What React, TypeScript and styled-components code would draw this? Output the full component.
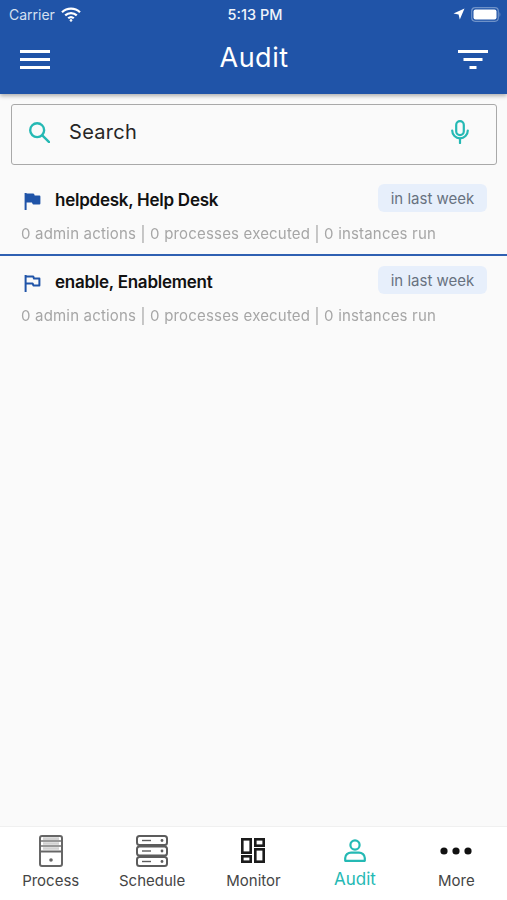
import React from "react";
import styled, { createGlobalStyle } from "styled-components";

const GlobalStyle = createGlobalStyle`
    html, body {
        margin: 0;
        padding: 0;
        background: #fafafa;
    }
    * {
        box-sizing: border-box;
    }
`;

const FONT = `Inter, "Open Sans", "Liberation Sans", sans-serif`;
const BLUE = "#2054a8";
const TEAL = "#25b9b4";

const Page = styled.div`
    width: 507px;
    height: 900px;
    display: flex;
    flex-direction: column;
    background: #fafafa;
    font-family: ${FONT};
    overflow: hidden;
`;

const Header = styled.header`
    height: 94px;
    flex-shrink: 0;
    background: ${BLUE};
    color: #fff;
    box-shadow: 0 2px 4px rgba(0, 0, 0, 0.3);
`;

const StatusBar = styled.div`
    height: 28px;
    padding: 0 6px 0 9px;
    display: grid;
    grid-template-columns: 1fr auto 1fr;
    align-items: center;
    font-size: 14px;
`;

const StatusLeft = styled.div`
    display: flex;
    align-items: center;
    gap: 6px;
    color: #d5e0f0;
`;

const StatusTime = styled.div`
    font-weight: 500;
    font-size: 14.5px;
    color: #eef3fa;
`;

const StatusRight = styled.div`
    display: flex;
    align-items: center;
    justify-content: flex-end;
    gap: 6px;
`;

const AppBar = styled.div`
    height: 58px;
    padding: 6px 19px 0 20px;
    display: flex;
    align-items: center;
    justify-content: space-between;
`;

const Title = styled.div`
    font-size: 27px;
    font-weight: 400;
    letter-spacing: 0.5px;
    margin-top: -5px;
`;

const SearchBox = styled.div`
    height: 61px;
    margin: 10px 10px 0 11px;
    padding: 0 27px 5px 16px;
    display: flex;
    align-items: center;
    border: 1.5px solid #a9a9a9;
    border-radius: 3px;
    background: #fafafa;
`;

const SearchText = styled.div`
    flex: 1;
    margin-left: 19px;
    font-size: 20px;
    letter-spacing: 0.3px;
    color: #262626;
`;

const Item = styled.div<{ $divided?: boolean }>`
    padding: ${(p) => (p.$divided ? "19px" : "10px")} 20px 0 21px;
    height: ${(p) => (p.$divided ? "91px" : "80px")};
    border-bottom: ${(p) => (p.$divided ? `2.5px solid #2f60b2` : "none")};
`;

const ItemTop = styled.div`
    height: 28px;
    display: flex;
    align-items: center;
`;

const FlagSlot = styled.div`
    width: 34px;
    padding: 6px 0 0 3px;
    display: flex;
`;

const ItemTitle = styled.div`
    flex: 1;
    font-size: 17px;
    font-weight: 600;
    letter-spacing: -0.25px;
    color: #111;
    margin-top: 4px;
`;

const Pill = styled.div`
    width: 109px;
    height: 28px;
    display: flex;
    align-items: center;
    justify-content: center;
    border-radius: 6px;
    background: #e7effb;
    color: #687280;
    font-size: 15px;
`;

const ItemSub = styled.div`
    margin-top: 12px;
    font-size: 15px;
    letter-spacing: 0.18px;
    color: #a6a6a6;
    white-space: nowrap;
    will-change: transform;
`;

const Spacer = styled.div`
    flex: 1;
`;

const BottomNav = styled.nav`
    height: 74px;
    flex-shrink: 0;
    display: grid;
    grid-template-columns: repeat(5, 1fr);
    background: #fff;
    border-top: 1.5px solid #f0f0f0;
`;

const NavItem = styled.div<{ $active?: boolean }>`
    display: flex;
    flex-direction: column;
    align-items: center;
    color: ${(p) => (p.$active ? TEAL : "#454545")};
`;

const NavIcon = styled.div<{ $top: number }>`
    height: 38px;
    padding-top: ${(p) => p.$top}px;
    display: flex;
    align-items: flex-start;
    justify-content: center;
`;

const NavLabel = styled.div<{ $active?: boolean }>`
    margin-top: ${(p) => (p.$active ? "4px" : "6px")};
    font-size: ${(p) => (p.$active ? "17px" : "15px")};
    line-height: 20px;
    white-space: nowrap;
`;

const Wifi = () => (
    <svg width="20" height="15" viewBox="0 0 20 15" fill="none" stroke="#fff" strokeWidth="2.2">
        <path d="M1 5.2a13 13 0 0 1 18 0" />
        <path d="M4.2 8.4a8.4 8.4 0 0 1 11.6 0" />
        <path d="M7.2 11.3a4.2 4.2 0 0 1 5.6 0" />
        <circle cx="10" cy="13.4" r="0.9" fill="#fff" strokeWidth="1" />
    </svg>
);

const LocationArrow = () => (
    <svg width="12" height="12" viewBox="0 0 12 12">
        <path d="M11.5 0.5 L0.5 5.5 L5.6 6.4 L6.8 11.5 Z" fill="#fff" />
    </svg>
);

const Battery = () => (
    <svg width="30" height="15" viewBox="0 0 30 15">
        <rect x="0.7" y="0.7" width="26.6" height="13.6" rx="3.5" fill="none" stroke="#6f92c8" strokeWidth="1.2" />
        <rect x="2.5" y="2.5" width="23" height="10" rx="2" fill="#fff" />
        <path d="M28.5 5.2 C29.6 5.6 29.6 9.4 28.5 9.8 Z" fill="#6f92c8" />
    </svg>
);

const MenuIcon = () => (
    <svg width="30" height="20" viewBox="0 0 30 20" fill="#fff">
        <rect y="0" width="30" height="3" />
        <rect y="8" width="30" height="3" />
        <rect y="16" width="30" height="3" />
    </svg>
);

const FilterIcon = () => (
    <svg width="30" height="20" viewBox="0 0 30 20" fill="#fff">
        <rect y="0" width="30" height="3" />
        <rect x="5.5" y="8" width="19" height="3" />
        <rect x="11.5" y="16" width="7" height="3" />
    </svg>
);

const SearchIcon = () => (
    <svg width="22" height="22" viewBox="0 0 24 24" fill="none" stroke={TEAL} strokeWidth="2.6">
        <circle cx="10" cy="10" r="7.6" />
        <path d="M15.6 15.6 L23 23" strokeLinecap="round" />
    </svg>
);

const MicIcon = () => (
    <svg width="18" height="24" viewBox="0 0 18 24" fill="none" stroke={TEAL} strokeWidth="2.2" strokeLinecap="round">
        <rect x="5.2" y="1.1" width="7.6" height="14" rx="3.8" />
        <path d="M1.2 10.5a7.8 7.8 0 0 0 15.6 0" />
        <path d="M9 18.5 V23" />
    </svg>
);

const FlagIcon = ({ filled }: { filled?: boolean }) => (
    <svg width="17" height="17" viewBox="0 0 17 17" fill="none" stroke={BLUE} strokeWidth="2">
        <path
            d="M1.6 1.4 H9.2 L10 3.6 H15.4 V10.4 H9.4 L8.6 8.4 H1.6"
            fill={filled ? BLUE : "none"}
            strokeLinejoin="round"
        />
        <path d="M1.6 0.6 V16.6" strokeLinecap="round" />
    </svg>
);

const ProcessIcon = () => (
    <svg width="24" height="32" viewBox="0 0 24 32" fill="none" stroke="#666" strokeWidth="2">
        <rect x="1" y="1" width="22" height="30" rx="2" />
        <path d="M2 16.5 H22" strokeWidth="2" />
        <path d="M2 6 H22 M2 11 H22" strokeWidth="1.6" stroke="#777" />
        <path d="M4 3.6 H20 M4 8.5 H20 M4 13.5 H20" stroke="#d2d2d2" strokeWidth="2.6" />
        <circle cx="12" cy="25" r="1.8" fill="#666" stroke="none" />
    </svg>
);

const ScheduleIcon = () => (
    <svg width="32" height="32" viewBox="0 0 32 32" fill="none" stroke="#5c5c5c" strokeWidth="2">
        {[1, 11.5, 22].map((y) => (
            <g key={y}>
                <rect x="1" y={y} width="30" height="9" rx="2.5" />
                <path d={`M6 ${y + 4.5} H15`} strokeWidth="1.4" />
                <circle cx="26" cy={y + 4.5} r="1.4" fill="#5c5c5c" stroke="none" />
            </g>
        ))}
    </svg>
);

const MonitorIcon = () => (
    <svg width="24" height="25" viewBox="0 0 24 25" fill="none" stroke="#1c1c1c" strokeWidth="2.6">
        <rect x="1.3" y="1.3" width="8.4" height="13.4" />
        <rect x="14.3" y="1.3" width="8.4" height="6.4" />
        <rect x="1.3" y="18.3" width="8.4" height="5.4" />
        <rect x="14.3" y="11.3" width="8.4" height="12.4" />
    </svg>
);

const AuditIcon = () => (
    <svg width="22" height="23" viewBox="0 0 22 23" fill="none" stroke={TEAL} strokeWidth="2.2">
        <circle cx="11" cy="6" r="4.6" />
        <path d="M1.2 21.8 V19 C1.2 15.8 4 13.6 7 13.6 H15 C18 13.6 20.8 15.8 20.8 19 V21.8 Z" strokeLinejoin="round" />
    </svg>
);

const MoreIcon = () => (
    <svg width="32" height="24" viewBox="0 0 32 24" fill="#111">
        <circle cx="4" cy="12" r="3.6" />
        <circle cx="16" cy="12" r="3.6" />
        <circle cx="28" cy="12" r="3.6" />
    </svg>
);

const SUMMARY = "0 admin actions | 0 processes executed | 0 instances run";

const navItems = [
    { label: "Process", icon: <ProcessIcon />, top: 8 },
    { label: "Schedule", icon: <ScheduleIcon />, top: 8 },
    { label: "Monitor", icon: <MonitorIcon />, top: 11 },
    { label: "Audit", icon: <AuditIcon />, top: 12, active: true },
    { label: "More", icon: <MoreIcon />, top: 12 },
];

const App = () => {
    return (
        <Page>
            <GlobalStyle />
            <Header>
                <StatusBar>
                    <StatusLeft>
                        Carrier
                        <Wifi />
                    </StatusLeft>
                    <StatusTime>5:13 PM</StatusTime>
                    <StatusRight>
                        <LocationArrow />
                        <Battery />
                    </StatusRight>
                </StatusBar>
                <AppBar>
                    <MenuIcon />
                    <Title>Audit</Title>
                    <FilterIcon />
                </AppBar>
            </Header>
            <SearchBox>
                <SearchIcon />
                <SearchText>Search</SearchText>
                <MicIcon />
            </SearchBox>
            <Item $divided>
                <ItemTop>
                    <FlagSlot>
                        <FlagIcon filled />
                    </FlagSlot>
                    <ItemTitle>helpdesk, Help Desk</ItemTitle>
                    <Pill>in last week</Pill>
                </ItemTop>
                <ItemSub>{SUMMARY}</ItemSub>
            </Item>
            <Item>
                <ItemTop>
                    <FlagSlot>
                        <FlagIcon />
                    </FlagSlot>
                    <ItemTitle>enable, Enablement</ItemTitle>
                    <Pill>in last week</Pill>
                </ItemTop>
                <ItemSub>{SUMMARY}</ItemSub>
            </Item>
            <Spacer />
            <BottomNav>
                {navItems.map((item) => (
                    <NavItem key={item.label} $active={item.active}>
                        <NavIcon $top={item.top}>{item.icon}</NavIcon>
                        <NavLabel $active={item.active}>{item.label}</NavLabel>
                    </NavItem>
                ))}
            </BottomNav>
        </Page>
    );
};

export default App;
